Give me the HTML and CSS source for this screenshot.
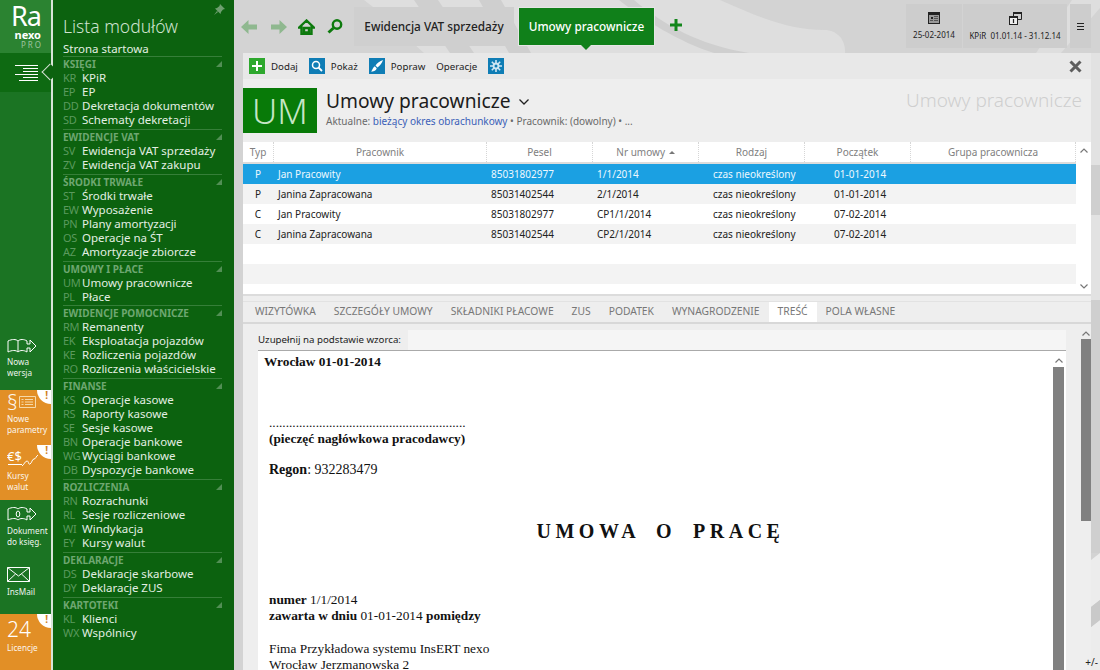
FILE: index.html
```html
<!DOCTYPE html>
<html lang="pl">
<head>
    <meta charset="UTF-8">
    <title>Umowy pracownicze</title>
    <link rel="stylesheet" href="styles.css">
</head>
<body>
    <!-- Icon rail -->
    <nav class="rail">
        <div class="logo">
            <div class="logo-ra">Ra</div>
            <div class="logo-nexo">nexo</div>
            <div class="logo-pro">PRO</div>
        </div>
        <div class="rail-active">
            <svg width="24" height="16" viewBox="0 0 24 16"><path d="M0 .5h23M8 3.500h15M8 6.500h15M0 9.500h23M8 12.500h15M4 15.500h19" stroke="#fff" fill="none"/></svg>
            <span class="rail-notch"></span>
        </div>
        <div class="rail-spacer"></div>
        <div class="rail-item rail-first">
            <svg width="30" height="17" viewBox="0 0 30 17"><path d="M1 3c4-2 8-2 10 0 2-2 6-2 9 0v3h3V2l6 6-6 6v-4h-3v4c-3-2-7-2-9 0-2-2-6-2-10 0zM11 3v11" fill="none" stroke="#fff"/></svg>
            <span>Nowa<br>wersja</span>
        </div>
        <div class="rail-item rail-orange">
            <i class="rail-alert">!</i>
            <div class="rail-icon-row">
                <span class="rail-para">§</span>
                <svg width="17" height="12" viewBox="0 0 17 12"><path d="M.5.500h16v11H.5zM2.500 3.500h2M6 3.500h8M2.500 6h2M6 6h8M2.500 8.500h2M6 8.500h8" fill="none" stroke="#f6d9a8"/></svg>
            </div>
            <span>Nowe<br>parametry</span>
        </div>
        <div class="rail-item rail-orange">
            <i class="rail-alert">!</i>
            <svg class="rail-money" width="32" height="20" viewBox="0 0 32 20"><text x="0" y="13" class="money-text">€$</text><path d="M1 16.500h14" stroke="#fff"/><path d="M15 18c2-1 3-5 5-5s1 4 3 3 2-5 4-5 2-3 4-4" fill="none" stroke="#fff"/></svg>
            <span>Kursy<br>walut</span>
        </div>
        <div class="rail-item rail-doc">
            <svg width="30" height="17" viewBox="0 0 30 17"><path d="M1 3c4-2 8-2 10 0 2-2 6-2 9 0v3h3V2l6 6-6 6v-4h-3v4c-3-2-7-2-9 0-2-2-6-2-10 0z" fill="none" stroke="#fff"/><ellipse cx="11" cy="8" rx="1.800" ry="3" fill="none" stroke="#fff"/></svg>
            <span>Dokument<br>do księg.</span>
        </div>
        <div class="rail-item rail-mail">
            <svg width="23" height="15" viewBox="0 0 23 15"><path d="M.5.500h22v14H.5zM.5.500 11.500 9l11-8.500M.5 14.500 8.500 7M22.500 14.500l-8-7.500" fill="none" stroke="#fff"/></svg>
            <span>InsMail</span>
        </div>
        <div class="rail-item rail-orange rail-licence">
            <i class="rail-alert">!</i>
            <div class="rail-num">24</div>
            <span>Licencje</span>
        </div>
    </nav>

    <!-- Module list -->
    <aside class="modules">
        <svg class="pin" width="11" height="11" viewBox="0 0 11 11"><path d="M6 0l5 5-2 .5L7 8 6.500 10 1 4.500 3 4l2.500-2zM3 7l-3 4 4-3z" fill="#6f9f70"/></svg>
        <h2 class="modules-title">Lista modułów</h2>
        <div class="start-link">Strona startowa</div>

        <div class="group group-first">
            <div class="group-head">KSIĘGI</div>
            <div class="mod"><b>KR</b>KPiR</div>
            <div class="mod"><b>EP</b>EP</div>
            <div class="mod"><b>DD</b>Dekretacja dokumentów</div>
            <div class="mod"><b>SD</b>Schematy dekretacji</div>
        </div>
        <div class="group">
            <div class="group-head">EWIDENCJE VAT</div>
            <div class="mod"><b>SV</b>Ewidencja VAT sprzedaży</div>
            <div class="mod"><b>ZV</b>Ewidencja VAT zakupu</div>
        </div>
        <div class="group">
            <div class="group-head">ŚRODKI TRWAŁE</div>
            <div class="mod"><b>ST</b>Środki trwałe</div>
            <div class="mod"><b>EW</b>Wyposażenie</div>
            <div class="mod"><b>PN</b>Plany amortyzacji</div>
            <div class="mod"><b>OS</b>Operacje na ŚT</div>
            <div class="mod"><b>AZ</b>Amortyzacje zbiorcze</div>
        </div>
        <div class="group">
            <div class="group-head">UMOWY I PŁACE</div>
            <div class="mod"><b>UM</b>Umowy pracownicze</div>
            <div class="mod"><b>PL</b>Płace</div>
        </div>
        <div class="group group-tight">
            <div class="group-head">EWIDENCJE POMOCNICZE</div>
            <div class="mod"><b>RM</b>Remanenty</div>
            <div class="mod"><b>EK</b>Eksploatacja pojazdów</div>
            <div class="mod"><b>KE</b>Rozliczenia pojazdów</div>
            <div class="mod"><b>RO</b>Rozliczenia właścicielskie</div>
        </div>
        <div class="group">
            <div class="group-head">FINANSE</div>
            <div class="mod"><b>KS</b>Operacje kasowe</div>
            <div class="mod"><b>RS</b>Raporty kasowe</div>
            <div class="mod"><b>SE</b>Sesje kasowe</div>
            <div class="mod"><b>BN</b>Operacje bankowe</div>
            <div class="mod"><b>WG</b>Wyciągi bankowe</div>
            <div class="mod"><b>DB</b>Dyspozycje bankowe</div>
        </div>
        <div class="group">
            <div class="group-head">ROZLICZENIA</div>
            <div class="mod"><b>RN</b>Rozrachunki</div>
            <div class="mod"><b>RL</b>Sesje rozliczeniowe</div>
            <div class="mod"><b>WI</b>Windykacja</div>
            <div class="mod"><b>EY</b>Kursy walut</div>
        </div>
        <div class="group">
            <div class="group-head">DEKLARACJE</div>
            <div class="mod"><b>DS</b>Deklaracje skarbowe</div>
            <div class="mod"><b>DY</b>Deklaracje ZUS</div>
        </div>
        <div class="group">
            <div class="group-head">KARTOTEKI</div>
            <div class="mod"><b>KL</b>Klienci</div>
            <div class="mod"><b>WX</b>Wspólnicy</div>
        </div>
    </aside>

    <main class="main">
        <!-- Background swooshes -->
        <svg class="swoosh" width="866" height="670" viewBox="0 0 866 670">
            <path d="M0 0h866v670H0z" fill="#d3d3d3"/>
            <path d="M130 0H486C530 20 560 30 590 30 605 30 612 42 611 53H190C170 35 150 15 130 0z" fill="#dedede"/>
            <path d="M180 0h24l36 53h-24zM245 0h22l30 53h-22z" fill="#cfcfcf"/>
            <path d="M400 0C430 25 465 45 515 53H480C445 42 410 20 385 0z" fill="#cfcfcf"/>
            <path d="M838 0h28v8l-39 45h-25z" fill="#dedede"/>
            <path d="M857 53h9v112h-9zM857 215h9v85h-9z" fill="#e2e2e2"/>
            <path d="M857 165h9v50h-9zM857 300h9v253h-9z" fill="#cfcfcf"/>
            <path d="M857 560l9-7v47l-9 7zM857 627l9-7v50h-9z" fill="#ececec"/>
            <path d="M857 607l9-7v20l-9 7z" fill="#c9c9c9"/>
        </svg>

        <header class="topbar">
            <div class="nav-icons">
                <svg width="18" height="14" viewBox="0 0 18 14"><path d="M7.500 0v4.500H16v5H7.500V14L0 7z" fill="#8fb88f"/></svg>
                <svg width="18" height="14" viewBox="0 0 18 14"><path d="M10.500 0v4.500H2v5h8.500V14L18 7z" fill="#8fb88f"/></svg>
                <svg class="home-icon" width="17" height="16" viewBox="0 0 17 16"><path d="M8.500 1.500 1.200 8.500H3.500v6.500h10V8.500h2.300zM6 9h5v4.500H6z" fill="none" stroke="#0d7a0d" stroke-width="2.400"/></svg>
                <svg class="search-icon" width="16" height="15" viewBox="0 0 16 15"><circle cx="10" cy="5.500" r="4.200" fill="none" stroke="#0d7a0d" stroke-width="2.400"/><path d="M6.500 9 1.500 13.500" stroke="#0d7a0d" stroke-width="3"/></svg>
            </div>
            <div class="tab-open">Ewidencja VAT sprzedaży</div>
            <div class="tab-open tab-current">Umowy pracownicze</div>
            <div class="tab-add">
                <svg width="12" height="12" viewBox="0 0 12 12"><path d="M6 0v12M0 6h12" stroke="#13861b" stroke-width="3"/></svg>
            </div>
            <div class="top-right">
                <div class="top-box top-date">
                    <svg width="12" height="12" viewBox="0 0 12 12"><path d="M0 0h12v12H0z" fill="#222"/><path d="M1 3h10v8H1z" fill="#999"/><path d="M3 5h2v2H3z" fill="#222"/><path d="M6 4.500h4M6 6.500h4M6 8.500h4M2 8.500h3" stroke="#555"/></svg>
                    <span>25-02-2014</span>
                </div>
                <div class="top-box top-period">
                    <svg width="13" height="13" viewBox="0 0 13 13"><path d="M4.500.5h8v7h-8z" fill="none" stroke="#222"/><path d="M4 0h9v2H4z" fill="#222"/><path d="M0 4h9v9H0z" fill="#222"/><path d="M1 6h7v6H1z" fill="#eee"/><path d="M4.500 7v4" stroke="#222" stroke-width="1.200"/></svg>
                    <span>KPiR&nbsp; 01.01.14 - 31.12.14</span>
                </div>
                <div class="top-menu">
                    <svg width="7" height="7" viewBox="0 0 7 7"><path d="M0 .5h7M0 3.500h7M0 6.500h7" stroke="#222"/></svg>
                </div>
            </div>
        </header>

        <section class="panel">
            <div class="toolbar">
                <button class="tool">
                    <span class="tool-icon tool-green"><svg width="10" height="10" viewBox="0 0 10 10"><path d="M5 0v10M0 5h10" stroke="#fff" stroke-width="2"/></svg></span>Dodaj
                </button>
                <button class="tool">
                    <span class="tool-icon tool-blue"><svg width="12" height="12" viewBox="0 0 12 12"><circle cx="5" cy="5" r="3.500" fill="none" stroke="#fff" stroke-width="1.500"/><path d="M7.500 7.500 11 11" stroke="#fff" stroke-width="1.800"/></svg></span>Pokaż
                </button>
                <button class="tool">
                    <span class="tool-icon tool-blue"><svg width="12" height="12" viewBox="0 0 12 12"><path d="M12 0C9 1 6 3 4.500 5.500L6.500 7.500C9 6 11 3 12 0zM3.800 6.300 5.700 8.200C5 11 2 11.500 0 11.500 1.500 10.500 1.500 7.500 3.800 6.300z" fill="#fff"/></svg></span>Popraw
                </button>
                <button class="tool">Operacje</button>
                <span class="tool-icon tool-blue"><svg width="12" height="12" viewBox="0 0 12 12"><path d="M6 0v12M0 6h12M1.800 1.800l8.400 8.400M10.200 1.800l-8.400 8.400" stroke="#cfe6f3" stroke-width="1.600"/><circle cx="6" cy="6" r="3.400" fill="#cfe6f3"/><circle cx="6" cy="6" r="1.500" fill="#0f7db5"/></svg></span>
                <svg class="close-x" width="13" height="13" viewBox="0 0 13 13"><path d="M1.500 1.500l10 10M11.500 1.500l-10 10" stroke="#5d5d5d" stroke-width="3"/></svg>
            </div>

            <div class="title-bar">
                <div class="title-badge">UM</div>
                <div class="title-text">
                    <h1>Umowy pracownicze <svg width="10" height="6" viewBox="0 0 10 6"><path d="M.5.500 5 5 9.500.5" fill="none" stroke="#222" stroke-width="1.300"/></svg></h1>
                    <p>Aktualne: <a>bieżący okres obrachunkowy</a> • Pracownik: (dowolny) • ...</p>
                </div>
                <div class="title-ghost">Umowy pracownicze</div>
            </div>

            <div class="grid-wrap">
                <div class="grid">
                    <div class="row row-head">
                        <div class="col-typ">Typ</div>
                        <div class="col-name">Pracownik</div>
                        <div class="col-pesel">Pesel</div>
                        <div class="col-nr">Nr umowy <i class="sort-up"></i></div>
                        <div class="col-kind">Rodzaj</div>
                        <div class="col-start">Początek</div>
                        <div class="col-group">Grupa pracownicza</div>
                    </div>
                    <div class="row row-selected">
                        <div class="col-typ">P</div><div class="col-name">Jan Pracowity</div><div class="col-pesel">85031802977</div><div class="col-nr">1/1/2014</div><div class="col-kind">czas nieokreślony</div><div class="col-start">01-01-2014</div><div class="col-group"></div>
                    </div>
                    <div class="row row-alt">
                        <div class="col-typ">P</div><div class="col-name">Janina Zapracowana</div><div class="col-pesel">85031402544</div><div class="col-nr">2/1/2014</div><div class="col-kind">czas nieokreślony</div><div class="col-start">01-01-2014</div><div class="col-group"></div>
                    </div>
                    <div class="row">
                        <div class="col-typ">C</div><div class="col-name">Jan Pracowity</div><div class="col-pesel">85031802977</div><div class="col-nr">CP1/1/2014</div><div class="col-kind">czas nieokreślony</div><div class="col-start">07-02-2014</div><div class="col-group"></div>
                    </div>
                    <div class="row row-alt">
                        <div class="col-typ">C</div><div class="col-name">Janina Zapracowana</div><div class="col-pesel">85031402544</div><div class="col-nr">CP2/1/2014</div><div class="col-kind">czas nieokreślony</div><div class="col-start">07-02-2014</div><div class="col-group"></div>
                    </div>
                    <div class="row"></div>
                    <div class="row row-alt"></div>
                </div>
                <div class="grid-scroll">
                    <svg width="8" height="5" viewBox="0 0 8 5"><path d="M.5 4.500 4 1l3.500 3.500" fill="none" stroke="#777" stroke-width="1.200"/></svg>
                    <svg width="8" height="5" viewBox="0 0 8 5"><path d="M.5.500 4 4 7.500.5" fill="none" stroke="#777" stroke-width="1.200"/></svg>
                </div>
            </div>

            <nav class="tabs">
                <a>WIZYTÓWKA</a>
                <a>SZCZEGÓŁY UMOWY</a>
                <a>SKŁADNIKI PŁACOWE</a>
                <a>ZUS</a>
                <a>PODATEK</a>
                <a>WYNAGRODZENIE</a>
                <a class="tab-on">TREŚĆ</a>
                <a>POLA WŁASNE</a>
            </nav>

            <div class="detail">
                <div class="detail-body">
                    <div class="doc-bar"><span>Uzupełnij na podstawie wzorca:</span></div>
                    <div class="doc">
                        <div class="doc-page">
                            <p class="doc-city"><b>Wrocław 01-01-2014</b></p>
                            <p class="doc-dots">...........................................................</p>
                            <p><b>(pieczęć nagłówkowa pracodawcy)</b></p>
                            <p class="doc-regon"><b>Regon</b>: 932283479</p>
                            <p class="doc-heading"><b>UMOWA O PRACĘ</b></p>
                            <p class="doc-number"><b>numer</b> 1/1/2014</p>
                            <p><b>zawarta w dniu</b> 01-01-2014 <b>pomiędzy</b></p>
                            <p class="doc-firm">Fima Przykładowa systemu InsERT nexo</p>
                            <p>Wrocław Jerzmanowska 2</p>
                        </div>
                        <div class="doc-scroll">
                            <svg width="8" height="5" viewBox="0 0 8 5"><path d="M.5 4.500 4 1l3.500 3.500" fill="none" stroke="#777" stroke-width="1.200"/></svg>
                            <div class="doc-thumb"></div>
                        </div>
                    </div>
                </div>
                <div class="detail-scroll">
                    <svg width="8" height="5" viewBox="0 0 8 5"><path d="M.5 4.500 4 1l3.500 3.500" fill="none" stroke="#777" stroke-width="1.200"/></svg>
                    <div class="detail-thumb"></div>
                </div>
            </div>
        </section>
        <div class="zoom-hint">+/-</div>
    </main>
</body>
</html>
```

FILE: styles.css
```css
* {
    margin: 0;
    padding: 0;
    box-sizing: border-box;
}

body {
    display: flex;
    width: 1100px;
    height: 670px;
    overflow: hidden;
    font-family: "Noto Sans", "Open Sans", sans-serif;
    background-color: #d4d4d4;
    color: #222;
}

/* Icon rail */
.rail {
    width: 53px;
    height: 670px;
    background-color: #1b7423;
    border-right: 2px solid #d8e4d8;
    display: flex;
    flex-direction: column;
    flex-shrink: 0;
}

.logo {
    height: 53px;
    background-color: #2b8331;
    color: white;
    padding: 3px 10px 0 0;
    display: flex;
    flex-direction: column;
    align-items: flex-end;
}

.logo-ra {
    font-size: 27px;
    line-height: 26px;
    letter-spacing: -1px;
}

.logo-nexo {
    font-size: 11px;
    font-weight: 700;
    line-height: 10px;
    margin-top: 1px;
}

.logo-pro {
    font-size: 8px;
    line-height: 10px;
    letter-spacing: 2px;
    margin-right: -2px;
    color: #9dc39f;
}

.rail-active {
    height: 39px;
    background-color: #0e6a12;
    position: relative;
    display: flex;
    align-items: center;
    padding-left: 15px;
}

.rail-notch {
    position: absolute;
    right: -2px;
    top: 13px;
    width: 12px;
    height: 12px;
    background-color: #0c620f;
    border-left: 1px solid #d8e4d8;
    border-bottom: 1px solid #d8e4d8;
    transform: translateX(3px) rotate(45deg);
}

.rail-spacer {
    height: 243px;
}

.rail-item {
    height: 55px;
    padding: 3px 0 0 7px;
    font-size: 8.200px;
    line-height: 10.500px;
    color: white;
    position: relative;
    display: flex;
    flex-direction: column;
    gap: 3px;
}

.rail-item span {
    display: block;
    opacity: 0.92;
}

.rail-first {
    gap: 2px;
}

.rail-doc {
    padding-top: 6px;
}

.rail-orange {
    background-color: #e28f26;
}

.rail-alert {
    position: absolute;
    top: 0;
    right: 0;
    width: 14px;
    height: 14px;
    background-color: white;
    border-bottom-left-radius: 14px;
    color: #d0801e;
    font-size: 10px;
    font-weight: 700;
    font-style: normal;
    line-height: 11px;
    text-align: right;
    padding-right: 3px;
}

.rail-icon-row {
    display: flex;
    align-items: center;
    gap: 1px;
    height: 18px;
}

.rail-para {
    font-size: 21px;
    line-height: 18px;
    font-weight: 300;
}

.money-text {
    font-family: "Noto Sans", sans-serif;
    font-size: 13px;
    fill: white;
}

.rail-mail {
    height: 59px;
    padding-top: 12px;
    gap: 5px;
}

.rail-licence {
    height: 56px;
    gap: 2px;
}

.rail-num {
    font-size: 21px;
    line-height: 24px;
    font-weight: 300;
}

/* Module list */
.modules {
    width: 181px;
    height: 670px;
    background-color: #0c620f;
    color: #e3efe3;
    padding: 0 12px 0 10px;
    position: relative;
    flex-shrink: 0;
    font-size: 11.500px;
}

.pin {
    position: absolute;
    top: 4px;
    right: 9px;
}

.modules-title {
    font-size: 17.500px;
    font-weight: 300;
    line-height: 26px;
    padding-top: 13px;
    height: 42px;
    color: #cfe3cf;
}

.start-link {
    height: 14px;
    line-height: 14px;
}

.group {
    margin-top: 2px;
    border-top: 1px solid #367f39;
    position: relative;
}

.group-first {
    margin-top: 0;
}

.group-tight {
    margin-top: 1px;
}

.group::after {
    content: "";
    position: absolute;
    top: 4px;
    right: 0;
    border-style: solid;
    border-width: 0 0 6px 6px;
    border-color: transparent transparent #528f55 transparent;
}

.group-head {
    height: 14px;
    line-height: 14px;
    font-size: 10px;
    font-weight: 700;
    color: #6ea771;
}

.mod {
    height: 14px;
    line-height: 14px;
    white-space: nowrap;
}

.mod b {
    display: inline-block;
    width: 19px;
    font-size: 11px;
    font-weight: 400;
    color: #5b9a5e;
    letter-spacing: -0.300px;
}

/* Main area */
.main {
    flex: 1;
    position: relative;
    min-width: 0;
}

.swoosh {
    position: absolute;
    top: 0;
    left: 0;
}

.topbar {
    position: relative;
    height: 53px;
    display: flex;
    align-items: flex-start;
}

.nav-icons {
    display: flex;
    align-items: center;
    height: 53px;
    padding-left: 7px;
    gap: 10px;
    width: 120px;
}

.home-icon {
    margin-left: 1px;
}

.search-icon {
    margin-left: 2px;
}

.tab-open {
    margin-top: 7px;
    height: 39px;
    width: 160px;
    background-color: #cfcfcf;
    font-size: 11.800px;
    font-weight: 500;
    line-height: 39px;
    text-align: center;
    color: #222;
}

.tab-current {
    position: relative;
    margin-left: 4px;
    width: 137px;
    background-color: #10801a;
    color: white;
    border: 1px solid #e6e6e6;
    line-height: 37px;
}

.tab-current::after {
    content: "";
    position: absolute;
    left: 62px;
    bottom: -5px;
    border-style: solid;
    border-width: 5px 5px 0 5px;
    border-color: #10801a transparent transparent transparent;
}

.tab-add {
    margin: 19px 0 0 15px;
    height: 12px;
    display: flex;
}

.top-right {
    display: flex;
    margin-left: auto;
    margin-right: 9px;
    margin-top: 4px;
    height: 44px;
    gap: 1px;
}

.top-box {
    display: flex;
    flex-direction: column;
    align-items: center;
    padding-top: 8px;
    gap: 5px;
    background-color: #cdcdcd;
    font-size: 8px;
    color: #222;
}

.top-date {
    width: 56px;
}

.top-period {
    width: 104px;
    margin-right: 2px;
}

.top-menu {
    width: 21px;
    background-color: #cdcdcd;
    display: flex;
    align-items: center;
    justify-content: center;
}

/* Panel */
.panel {
    position: relative;
    margin: 0 9px;
    height: 617px;
    background-color: #eeeeee;
    display: flex;
    flex-direction: column;
}

.toolbar {
    height: 26px;
    background-color: #e8e8e8;
    display: flex;
    align-items: center;
    padding-left: 6px;
    flex-shrink: 0;
}

.tool {
    display: flex;
    align-items: center;
    gap: 6px;
    background: none;
    border: none;
    font-family: inherit;
    font-size: 9.700px;
    color: #222;
    margin-right: 11px;
}

.tool-icon {
    width: 16px;
    height: 16px;
    display: flex;
    align-items: center;
    justify-content: center;
}

.tool-green {
    background-color: #2ea82e;
}

.tool-blue {
    background-color: #0f7db5;
}

.close-x {
    margin-left: auto;
    margin-right: 9px;
}

.title-bar {
    height: 63px;
    padding-top: 9px;
    display: flex;
    align-items: flex-start;
    flex-shrink: 0;
}

.title-badge {
    width: 74px;
    height: 45px;
    background-color: #087a08;
    color: #c5e6c5;
    font-size: 35px;
    font-weight: 300;
    line-height: 45px;
    text-align: center;
}

.title-text {
    padding-left: 9px;
}

.title-text h1 {
    font-size: 19.200px;
    font-weight: 400;
    line-height: 26px;
    color: #1c1c1c;
}

.title-text h1 svg {
    vertical-align: 3px;
    margin-left: 3px;
}

.title-text p {
    font-size: 10px;
    line-height: 14px;
    color: #6a6a6a;
}

.title-text a {
    color: #3a5fb8;
}

.title-ghost {
    margin-left: auto;
    margin-right: 9px;
    font-size: 19px;
    font-weight: 300;
    line-height: 25px;
    color: #cfcfcf;
}

/* Grid */
.grid-wrap {
    display: flex;
    height: 154px;
    background-color: white;
    flex-shrink: 0;
    border-bottom: 2px solid #dcdcdc;
    overflow: hidden;
}

.grid {
    width: 833px;
    font-size: 10px;
}

.row {
    display: flex;
    height: 20px;
    line-height: 20px;
    white-space: nowrap;
}

.row-head {
    height: 22px;
    line-height: 20px;
    color: #808080;
    border-bottom: 2px solid #dcdcdc;
    text-align: center;
}

.row-head > div {
    border-right: 1px dotted #d6d6d6;
    padding: 0 !important;
    text-align: center !important;
}

.row-alt {
    background-color: #f3f3f3;
}

.row-selected {
    background-color: #1ba0e2;
    color: #eef8fe;
}

.col-typ {
    width: 31px;
    text-align: center;
    padding-right: 1px;
}

.col-name {
    width: 213px;
    padding-left: 4px;
}

.col-pesel {
    width: 106px;
    padding-left: 4px;
}

.col-nr {
    width: 106px;
    padding-left: 4px;
}

.col-kind {
    width: 106px;
    padding-left: 14px;
}

.col-start {
    width: 106px;
    padding-left: 29px;
}

.col-group {
    width: 165px;
}

.sort-up {
    display: inline-block;
    vertical-align: 2px;
    margin-left: 1px;
    border-style: solid;
    border-width: 0 3px 3px 3px;
    border-color: transparent transparent #777 transparent;
}

.grid-scroll {
    flex: 1;
    display: flex;
    flex-direction: column;
    justify-content: space-between;
    align-items: center;
    padding: 6px 0 5px;
}

/* Tabs */
.tabs {
    margin-top: 5px;
    height: 23px;
    display: flex;
    padding-left: 3px;
    background-color: #eeeeee;
    border-top: 1px solid #e2e2e2;
    border-bottom: 2px solid #d8d8d8;
    flex-shrink: 0;
}

.tabs a {
    padding: 0 9px;
    font-size: 10.300px;
    line-height: 19px;
    color: #777;
}

.tabs .tab-on {
    background-color: white;
}

/* Document */
.detail {
    flex: 1;
    display: flex;
    min-height: 0;
    padding: 6px 0 0 15px;
    overflow: hidden;
}

.detail-body {
    width: 808px;
    flex-shrink: 0;
}

.doc-bar {
    height: 20px;
    background-color: #f5f5f5;
    font-size: 9.700px;
    line-height: 19px;
}

.doc-bar span {
    display: inline-block;
    width: 150px;
    height: 20px;
    background-color: #eeeeee;
}

.doc {
    height: 400px;
    background-color: white;
    border-top: 1px solid #aaa;
    display: flex;
}

.doc-page {
    flex: 1;
    padding: 3px 0 0 11px;
    font-family: "Liberation Serif", serif;
    font-size: 13.330px;
    line-height: 16px;
    color: #111;
}

.doc-city {
    margin-left: -5px;
}

.doc-dots {
    margin-top: 45px;
}

.doc-regon {
    margin-top: 15px;
    font-size: 14px;
}

.doc-heading {
    margin-top: 40px;
    text-align: center;
    font-size: 20px;
    letter-spacing: 4.500px;
    word-spacing: 7.500px;
    line-height: 26px;
}

.doc-number {
    margin-top: 48px;
}

.doc-firm {
    margin-top: 17px;
}

.doc-scroll {
    width: 13px;
    margin-right: 1px;
    display: flex;
    flex-direction: column;
    align-items: center;
    padding-top: 7px;
    gap: 4px;
}

.doc-thumb {
    width: 11px;
    flex: 1;
    background-color: #808080;
}

.detail-scroll {
    margin-left: 15px;
    width: 10px;
    flex-shrink: 0;
    display: flex;
    flex-direction: column;
    align-items: center;
    gap: 3px;
    padding-top: 1px;
}

.detail-thumb {
    width: 10px;
    height: 182px;
    background-color: #808080;
}

.zoom-hint {
    position: absolute;
    right: 2px;
    bottom: 1px;
    font-size: 10px;
    color: #222;
}
```
